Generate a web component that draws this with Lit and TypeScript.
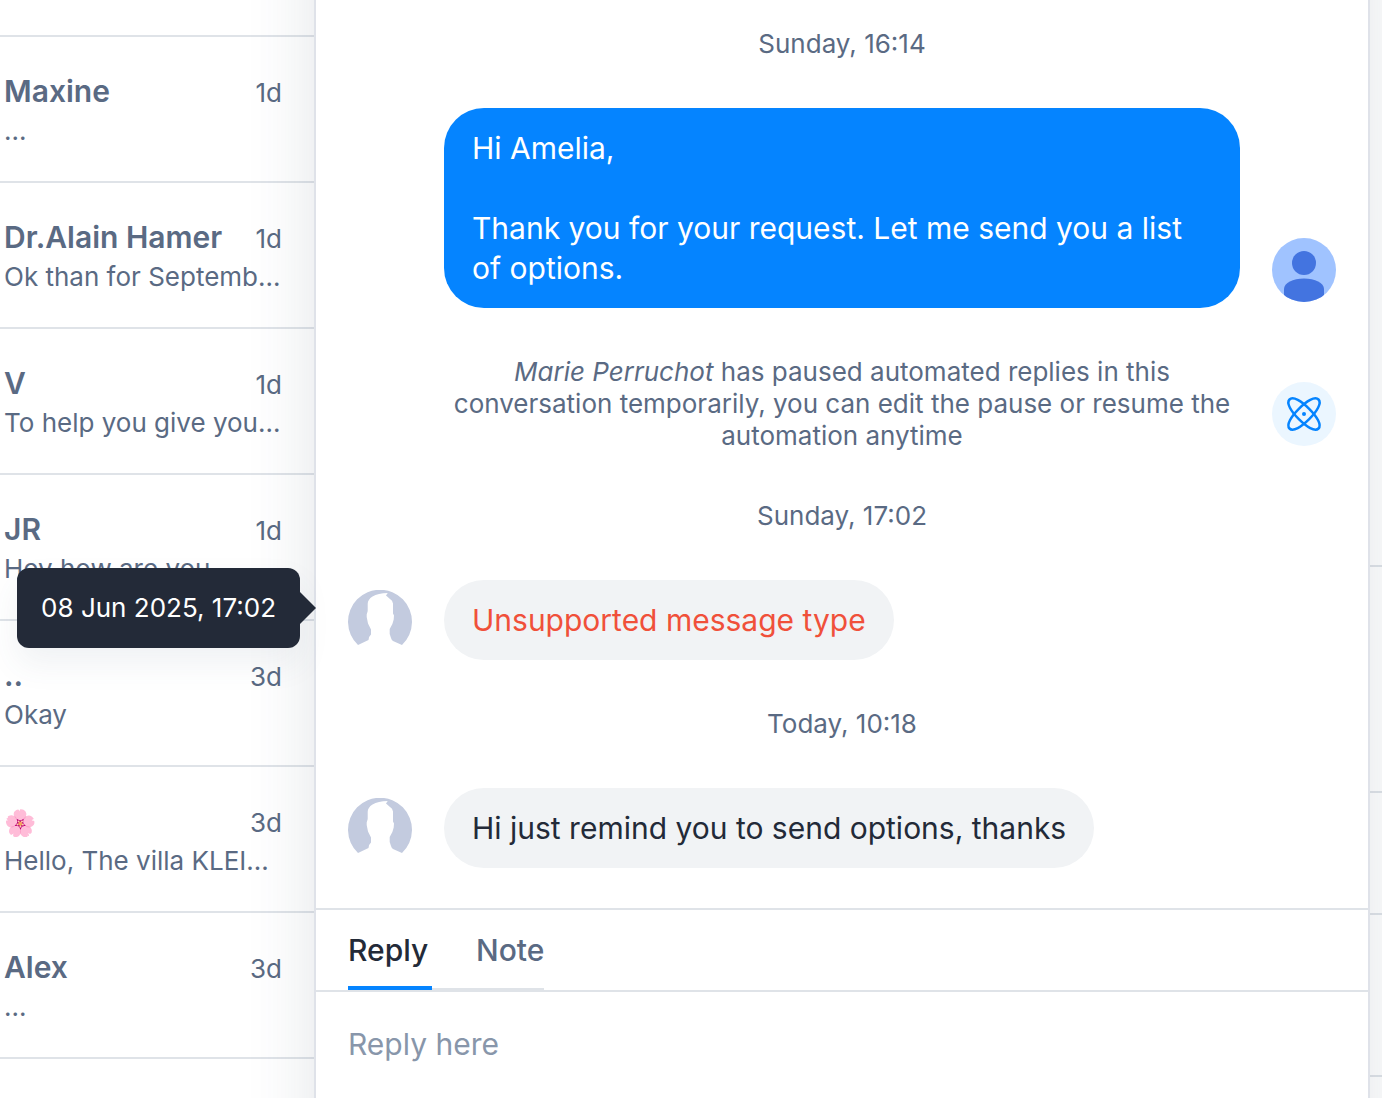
import { LitElement, html, css, svg, nothing } from "lit";
import { customElement, property } from "lit/decorators.js";

interface Conversation {
  name: string;
  age: string;
  preview: string;
  emoji?: boolean;
}

const conversations: Conversation[] = [
  { name: "Maxine", age: "1d", preview: "..." },
  { name: "Dr.Alain Hamer", age: "1d", preview: "Ok than for Septemb..." },
  { name: "V", age: "1d", preview: "To help you give you..." },
  { name: "JR", age: "1d", preview: "Hey how are you" },
  { name: "..", age: "3d", preview: "Okay" },
  { name: "🌸", age: "3d", preview: "Hello, The villa KLEI...", emoji: true },
  { name: "Alex", age: "3d", preview: "..." },
];

@customElement("conversation-list")
export class ConversationList extends LitElement {
  static styles = css`
    :host {
      display: block;
      color: #5a6a83;
    }
    .list {
      list-style: none;
      margin: 0;
      padding: 35px 0 0;
    }
    .item {
      border-top: 2px solid #dfe3e8;
    }
    .item:last-child {
      border-bottom: 2px solid #dfe3e8;
    }
    .link {
      display: block;
      padding: 34px 32px 30px 4px;
      color: inherit;
      text-decoration: none;
    }
    .head {
      display: flex;
      align-items: baseline;
      justify-content: space-between;
      height: 40px;
      line-height: 40px;
    }
    .name {
      font-size: 30px;
      font-weight: 600;
    }
    .emoji {
      font-size: 26px;
    }
    .age,
    .preview {
      font-size: 26px;
    }
    .preview {
      height: 40px;
      line-height: 40px;
      white-space: nowrap;
      overflow: hidden;
    }
  `;

  render() {
    return html`<ul class="list">
      ${conversations.map(
        (c) => html`<li class="item">
          <a class="link" href="#">
            <div class="head">
              <span class="name">${c.emoji ? html`<span class="emoji">${c.name}</span>` : c.name}</span>
              <span class="age">${c.age}</span>
            </div>
            <div class="preview">${c.preview}</div>
          </a>
        </li>`,
      )}
    </ul>`;
  }
}

@customElement("user-avatar")
export class UserAvatar extends LitElement {
  @property() kind: "guest" | "agent" | "automation" = "guest";

  static styles = css`
    :host {
      display: block;
      width: 64px;
      height: 64px;
    }
    .art {
      display: block;
      width: 100%;
      height: 100%;
    }
  `;

  private art() {
    switch (this.kind) {
      case "agent":
        return svg`
          <clipPath id="disc"><circle cx="32" cy="32" r="32" /></clipPath>
          <circle cx="32" cy="32" r="32" fill="#a0c3ff" />
          <g clip-path="url(#disc)" fill="#4374e0">
            <circle cx="32" cy="25" r="12" />
            <path d="M12 64V51C12 45 21 40.500 32 40.500S52 45 52 51V64Z" />
          </g>`;
      case "automation":
        return svg`
          <circle cx="32" cy="32" r="32" fill="#ebf6ff" />
          <g fill="none" stroke="#0584ff" stroke-width="2.500">
            <path transform="translate(32 32) rotate(45)" d="M-20.500 0C-20.500 -5 -11 -7.300 0 -7.300S20.500 -5 20.500 0S11 7.300 0 7.300S-20.500 5 -20.500 0Z" />
            <path transform="translate(32 32) rotate(-45)" d="M-20.500 0C-20.500 -5 -11 -7.300 0 -7.300S20.500 -5 20.500 0S11 7.300 0 7.300S-20.500 5 -20.500 0Z" />
          </g>
          <circle cx="32" cy="32" r="2" fill="#0584ff" />`;
      default:
        return svg`
          <path fill="#c3cbdf" d="M10 55A32 32 0 1 1 54 55L45 51Q43.500 50 43 48L41.700 44V39Q45 34 45.700 29.500L46 25.500L45 23.500V13.500L44 10.700L38 5.500L39.700 3Q30 3 24.500 6.500Q19.700 9.500 19.700 14V21L18.700 24.500V27L20 33.500L23 39.500V44.500Q21 46 20.500 50Z" />`;
    }
  }

  render() {
    return html`<svg class="art" viewBox="0 0 64 64" aria-hidden="true">${this.art()}</svg>`;
  }
}

@customElement("chat-thread")
export class ChatThread extends LitElement {
  static styles = css`
    :host {
      display: flex;
      flex-direction: column;
      justify-content: flex-end;
      gap: 48px;
      padding: 28px 32px 40px;
    }
    .date {
      margin: 0;
      font-size: 26px;
      line-height: 32px;
      text-align: center;
      color: #5a6a83;
    }
    .row {
      position: relative;
      display: grid;
      grid-template-columns: 64px minmax(0, 1fr) 64px;
      column-gap: 32px;
      align-items: end;
    }
    .avatar {
      margin-bottom: 6px;
    }
    .middle {
      grid-column: 2;
    }
    .bubble {
      box-sizing: border-box;
      width: fit-content;
      margin: 0;
      padding: 20px 28px;
      border-radius: 40px;
      font-size: 30px;
      line-height: 40px;
      white-space: pre-line;
      background: #f1f3f5;
      color: #232a38;
    }
    .sent {
      background: #0584ff;
      color: #fff;
    }
    .error {
      color: #f0503a;
    }
    .event {
      margin: 0;
      font-size: 26px;
      line-height: 32px;
      text-align: center;
      color: #5a6a83;
    }
    .tooltip {
      position: absolute;
      top: -12px;
      right: calc(100% + 48px);
      padding: 20px 24px;
      border-radius: 12px;
      background: #232a38;
      color: #fff;
      font-size: 26px;
      line-height: 40px;
      white-space: nowrap;
      box-shadow: 0 16px 32px rgba(67, 84, 110, 0.08);
    }
    .tooltip::after {
      content: "";
      position: absolute;
      top: 24px;
      left: 100%;
      border: 16px solid transparent;
      border-left-color: #232a38;
      border-right-width: 0;
    }
  `;

  private received(text: string, error = false, tooltip = "") {
    return html`<div class="row">
      <user-avatar class="avatar"></user-avatar>
      <p class="middle bubble ${error ? "error" : ""}">${text}</p>
      ${tooltip ? html`<div class="tooltip" role="tooltip">${tooltip}</div>` : nothing}
    </div>`;
  }

  render() {
    return html`
      <p class="date">Sunday, 16:14</p>
      <div class="row">
        <p class="middle bubble sent">${"Hi Amelia,\n\nThank you for your request. Let me send you a list of options."}</p>
        <user-avatar class="avatar" kind="agent"></user-avatar>
      </div>
      <div class="row">
        <p class="middle event"><em>Marie Perruchot</em> has paused automated replies in this conversation temporarily, you can edit the pause or resume the automation anytime</p>
        <user-avatar class="avatar" kind="automation"></user-avatar>
      </div>
      <p class="date">Sunday, 17:02</p>
      ${this.received("Unsupported message type", true, "08 Jun 2025, 17:02")}
      <p class="date">Today, 10:18</p>
      ${this.received("Hi just remind you to send options, thanks")}
    `;
  }
}

@customElement("reply-composer")
export class ReplyComposer extends LitElement {
  static styles = css`
    :host {
      display: block;
      border-top: 2px solid #dfe3e8;
    }
    .bar {
      display: flex;
      padding: 0 32px;
      border-bottom: 2px solid #dfe3e8;
    }
    .tabs {
      display: flex;
      box-shadow: inset 0 -2px #dfe3e8;
    }
    .tab {
      height: 80px;
      margin: 0;
      padding: 4px 0 0;
      border: 0;
      border-bottom: 4px solid transparent;
      background: none;
      font: inherit;
      font-size: 30px;
      font-weight: 500;
      line-height: 40px;
      color: #5a6a83;
      text-align: left;
    }
    .active {
      min-width: 84px;
      margin-right: 44px;
      border-bottom-color: #0584ff;
      color: #232a38;
    }
    .input {
      display: block;
      box-sizing: border-box;
      width: 100%;
      height: 106px;
      padding: 32px;
      border: 0;
      outline: 0;
      resize: none;
      background: none;
      font: inherit;
      font-size: 30px;
      line-height: 40px;
      color: #232a38;
    }
    .input::placeholder {
      color: #8896aa;
      opacity: 1;
    }
  `;

  render() {
    return html`
      <div class="bar">
        <div class="tabs" role="tablist">
          <button class="tab active" role="tab" aria-selected="true">Reply</button>
          <button class="tab" role="tab" aria-selected="false">Note</button>
        </div>
      </div>
      <textarea class="input" aria-label="Reply here" placeholder="Reply here"></textarea>
    `;
  }
}

@customElement("app-root")
export class AppRoot extends LitElement {
  static styles = css`
    :host {
      display: grid;
      grid-template-columns: 314px minmax(0, 1fr) 12px;
      height: 100vh;
      overflow: hidden;
      background: #fff;
      font-family: Inter, "Liberation Sans", sans-serif;
    }
    .sidebar {
      min-width: 0;
    }
    .panel {
      position: relative;
      z-index: 1;
      display: flex;
      flex-direction: column;
      border: solid #dfe2e9;
      border-width: 0 2px;
      background: #fff;
    }
    /* Taller than the panel so the side shadows stay even at both ends. */
    .panel::before {
      content: "";
      position: absolute;
      inset: -80px -2px;
      z-index: -1;
      box-shadow: 0 0 64px rgba(50, 68, 95, 0.14);
      pointer-events: none;
    }
    .thread {
      flex: 1;
    }
    .details {
      display: grid;
      grid-template-rows: 567px 226px 122px 162px 1fr;
      background: #fff;
    }
    .section {
      border-bottom: 2px solid #dfe3e8;
    }
  `;

  render() {
    return html`
      <conversation-list class="sidebar"></conversation-list>
      <main class="panel">
        <chat-thread class="thread"></chat-thread>
        <reply-composer></reply-composer>
      </main>
      <aside class="details">
        ${[0, 1, 2, 3].map(() => html`<div class="section"></div>`)}
      </aside>
    `;
  }
}
